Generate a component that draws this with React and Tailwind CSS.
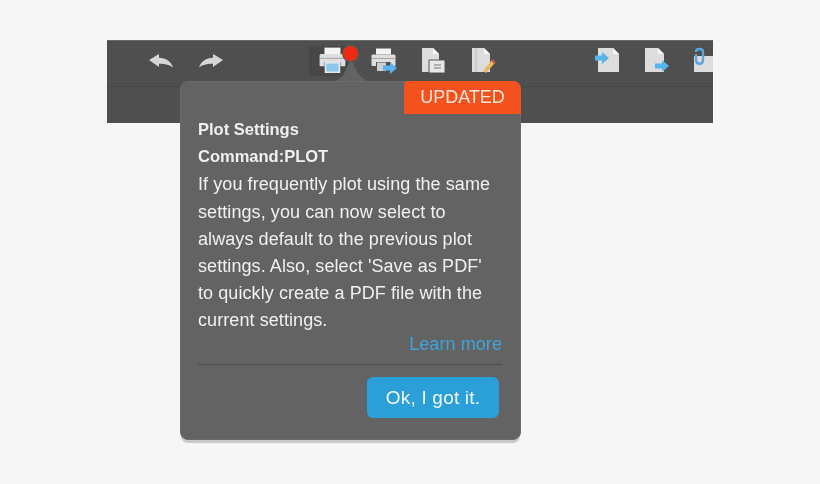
const Undo = ({ flip }) => (
    <svg width="26" height="16" viewBox="0 0 26 16" className={flip ? "shrink-0 -scale-x-100" : "shrink-0"}>
        <path d="M1 7 11 1V4.8C18 5 23 8.5 25 14.5 21.5 11.5 16 10.5 11 10.8V14Z" fill="#d6d6d6" />
    </svg>
);

const Printer = ({ children, size = 28 }) => (
    <svg width={size} height={size} viewBox="0 0 28 28" className="shrink-0">
        <path d="M6 1.5H21V7.5H6Z" fill="#f4f4f4" />
        <path d="M3 7.5H24C25 7.5 25.5 8 25.5 9V18C25.5 19 25 19 24 19H21V15H6V19H3C2 19 1.5 19 1.5 18V9C1.5 8 2 7.5 3 7.5Z" fill="#dedede" />
        <path d="M1.5 11.5H25.5" stroke="#a8a8a8" strokeWidth="1" />
        {children}
    </svg>
);

const Sheet = ({ children, x = 3, w = 19 }) => (
    <svg width="28" height="28" viewBox="0 0 28 28" className="shrink-0">
        <path d={`M${x} 1H${x + w - 6}L${x + w} 7V25H${x}Z`} fill="#dddddd" />
        <path d={`M${x + w - 6} 1V7H${x + w}Z`} fill="#f7f7f7" />
        {children}
    </svg>
);

const Arrow = ({ x, y }) => (
    <path transform={`translate(${x} ${y})`} d="M0 3.5H7V0L14 6 7 12V8.5H0Z" fill="#58b4ec" />
);

export default function App() {
    return (
        <div className="w-[820px] h-[484px] bg-[#f6f6f6] pt-10 pl-[107px] overflow-hidden blur-[0.7px] font-['Liberation_Sans',Arial,sans-serif]">
            <div className="relative w-[606px] h-[83px] bg-[#4f4f4f] border-t border-[#6a6a6a]">
                {/* toolbar */}
                <div className="h-[46px] border-b border-[#474747] flex items-center pl-[41px] pb-[5px] overflow-hidden">
                    <Undo />
                    <div className="ml-6 shrink-0"><Undo flip /></div>
                    <div className="ml-[85px] w-[44px] h-[30px] shrink-0 bg-[#474747] rounded-sm flex items-center pl-[9px]">
                        <Printer size={30}>
                            <path d="M7 15.5H20V24.5H7Z" fill="#8cc8ee" stroke="#e8e8e8" strokeWidth="1.5" />
                        </Printer>
                    </div>
                    <div className="ml-[17px] shrink-0">
                        <Printer>
                            <path d="M7 15.5H16V24H7Z" fill="#cfcfcf" />
                            <Arrow x={13} y={15} />
                        </Printer>
                    </div>
                    <div className="ml-[21px] shrink-0">
                        <Sheet w={17}>
                            <path d="M10 13H26V26H10Z" fill="#e8e8e8" stroke="#555555" strokeWidth="1" />
                            <path d="M15 18H22M15 21H22" stroke="#777777" strokeWidth="1.2" />
                        </Sheet>
                    </div>
                    <div className="ml-[22px] shrink-0">
                        <Sheet w={18}>
                            <path d="M7 1V25" stroke="#bdbdbd" strokeWidth="1" />
                            <path d="M14 24 17 26 26 16 23 13Z" fill="#eeb65a" />
                            <path d="M22.5 14 24 12 27 15 25.5 17Z" fill="#c9503c" />
                        </Sheet>
                    </div>
                    <div className="ml-[98px] shrink-0">
                        <Sheet x={3} w={21}>
                            <Arrow x={0} y={5} />
                        </Sheet>
                    </div>
                    <div className="ml-[20px] shrink-0">
                        <Sheet x={2} w={19}>
                            <Arrow x={12} y={13} />
                        </Sheet>
                    </div>
                    <div className="ml-[23px] shrink-0">
                        <svg width="28" height="28" viewBox="0 0 28 28" className="shrink-0">
                            <path d="M0 9H28V25H0Z" fill="#dddddd" />
                            <path d="M2 5C2 1 9 1 9 5V13C9 18 2 18 2 13V7" fill="none" stroke="#58a6dc" strokeWidth="2.4" />
                        </svg>
                    </div>
                </div>

                {/* red dot over printer */}
                <div className="absolute left-[236px] top-[5px] z-20 size-[15px] rounded-full bg-[#ee2a12] ring-1 ring-[#5a5a5a]" />

                {/* popover tail */}
                <svg className="absolute left-[218px] top-[16px] z-10" width="54" height="26" viewBox="0 0 54 26">
                    <path d="M2 26C12 25 17 21 20 15L24 6C25 4 27 4 28 6L33 16C37 22 42 25 52 26Z" fill="#636363" />
                </svg>

                {/* popover */}
                <div className="absolute left-[73px] top-[40px] z-10 w-[341px] h-[359px] bg-[#636363] rounded-lg border border-[#6b6b6b] shadow-[0_4px_1px_-1px_#c9c9c9] pl-[17px] pr-[18px] pt-[34px] text-[#f0f0f0] text-[18px] leading-[27.2px] tracking-[0.08px]">
                    <div className="absolute right-[-1px] top-[-1px] w-[117px] h-[33px] bg-[#f4511c] rounded-tr-lg rounded-tl-sm flex items-center justify-center text-[18px] tracking-normal text-[#fbe6dc]">
                        UPDATED
                    </div>
                    <p className="font-bold text-[16.5px] tracking-normal">Plot Settings</p>
                    <p className="font-bold text-[16.5px] tracking-normal">Command:PLOT</p>
                    <p className="whitespace-pre-line mt-px">
                        {"If you frequently plot using the same\nsettings, you can now select to\nalways default to the previous plot\nsettings. Also, select 'Save as PDF'\nto quickly create a PDF file with the\ncurrent settings."}
                    </p>
                    <div className="text-right text-[#3da5dc] leading-[20px] -mt-px">Learn more</div>
                    <div className="mt-[10px] border-t border-[#4e4e4e]" />
                    <div className="flex justify-end mt-3 pr-[3px]">
                        <button className="w-[132px] h-[41px] rounded-md bg-[#2a9fd8] text-[#f2f8fc] text-[19px] tracking-[0.2px]">Ok, I got it.</button>
                    </div>
                </div>
            </div>
        </div>
    );
}
